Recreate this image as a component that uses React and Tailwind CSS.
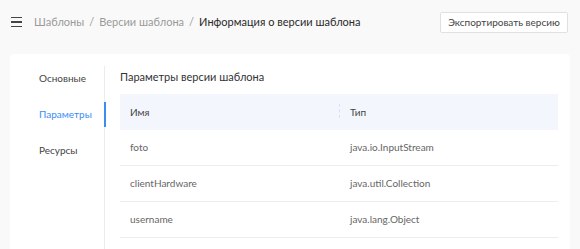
import React from "react";

const rows = [
  ["foto", "java.io.InputStream"],
  ["clientHardware", "java.util.Collection"],
  ["username", "java.lang.Object"],
];

export default function App() {
  return (
    <div className="h-[249px] w-[580px] overflow-hidden bg-[#f9f9f9] font-['Lato',sans-serif]">
      <header className="flex h-[44px] items-center pl-[11px] pr-[12px]">
        <div className="flex w-[11px] flex-col gap-[3px]">
          <span className="block h-[1.5px] w-[11px] bg-[#444]" />
          <span className="block h-[1.5px] w-[11px] bg-[#444]" />
          <span className="block h-[1.5px] w-[11px] bg-[#444]" />
        </div>
        <nav className="ml-[12px] flex items-center gap-[5px] text-[11px] leading-[16px]">
          <span className="text-[#9a9a9a]">Шаблоны</span>
          <span className="text-[#9a9a9a]">/</span>
          <span className="text-[#9a9a9a]">Версии шаблона</span>
          <span className="text-[#9a9a9a]">/</span>
          <span className="text-[#2a2a2a]">Информация о версии шаблона</span>
        </nav>
        <button className="ml-auto flex h-[21px] w-[128px] items-center justify-center whitespace-nowrap rounded-[2px] border border-[#e0e0e0] bg-white text-[10px] text-[#444]">
          Экспортировать версию
        </button>
      </header>

      <div className="mx-[10px] mt-[10px] flex h-[300px] rounded-[4px] bg-white">
        <aside className="mt-[12px] flex w-[95px] flex-col gap-[11px] border-r border-[#ececec] text-[10px]">
          <div className="flex h-[25px] items-center pl-[29px] text-[#444]">Основные</div>
          <div className="relative flex h-[25px] items-center pl-[29px] text-[#3b8df5]">
            Параметры
            <span className="absolute right-[-1.5px] top-0 h-[25px] w-[2px] bg-[#3b8df5]" />
          </div>
          <div className="flex h-[25px] items-center pl-[29px] text-[#444]">Ресурсы</div>
        </aside>

        <section className="flex-1 pl-[15px] pr-[12px] pt-[15px]">
          <h2 className="text-[11px] leading-[16px] text-[#333]">Параметры версии шаблона</h2>
          <div className="mt-[9px] text-[10px]">
            <div className="flex h-[36px] items-center bg-[#f3f7fd] text-[#444]">
              <div className="w-1/2 pl-[10px]">Имя</div>
              <div className="relative w-1/2 pl-[11px]">
                <span className="absolute left-0 top-[-1px] h-[14px] border-l border-dashed border-[#dde2ea]" />
                Тип
              </div>
            </div>
            {rows.map(([name, type]) => (
              <div key={name} className="flex h-[36px] items-center border-b border-[#ededed] text-[#666]">
                <div className="w-1/2 pl-[10px]">{name}</div>
                <div className="w-1/2 pl-[11px]">{type}</div>
              </div>
            ))}
          </div>
        </section>
      </div>
    </div>
  );
}
